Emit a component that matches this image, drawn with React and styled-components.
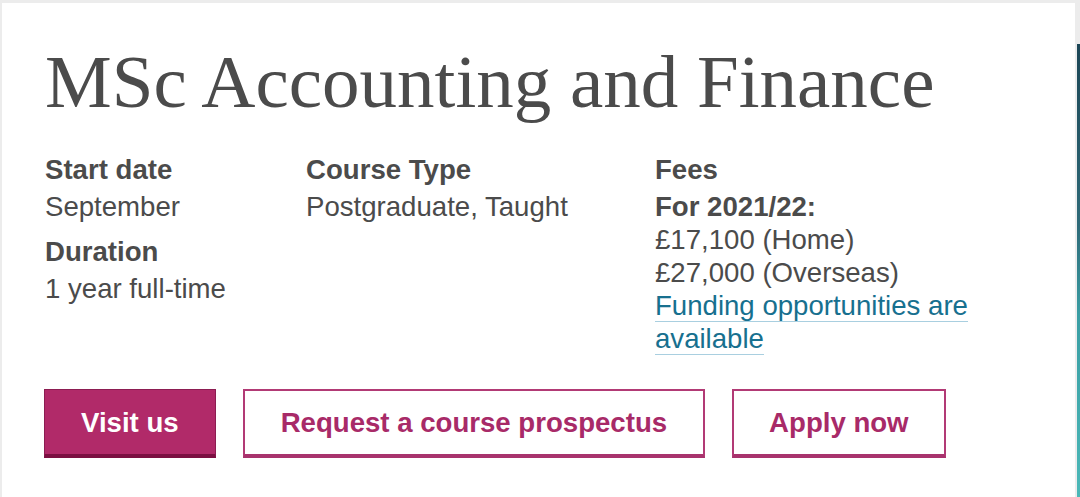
import React from "react";
import styled, { createGlobalStyle } from "styled-components";

const Global = createGlobalStyle`
  html, body { margin: 0; padding: 0; background: #ececec; }
  body { font-family: "Liberation Sans", Arial, sans-serif; }
  * { box-sizing: border-box; }
`;

const Page = styled.div`
  display: flex;
  height: 497px;
  padding: 3px 0 0 2px;
  gap: 2px;
  overflow: hidden;
`;

const Card = styled.section`
  flex: 0 0 1073px;
  background: #ffffff;
  padding: 41px 0 0 43px;
`;

const Strip = styled.div`
  flex: 1;
  margin-top: 41px;
  background: linear-gradient(180deg, #1c4656 0%, #2e6a78 40%, #3a9ea4 60%, #4bb8b8 100%);
`;

const Title = styled.h1`
  margin: 0;
  font-family: "Liberation Serif", Georgia, serif;
  font-weight: 400;
  font-size: 75px;
  line-height: 75px;
  color: #4b4b4b;
`;

const Info = styled.div`
  display: grid;
  grid-template-columns: 261px 349px 345px;
  margin-top: 34px;
  font-size: 27.6px;
  line-height: 33px;
  color: #4b4b4b;
`;

const Column = styled.div`
  display: flex;
  flex-direction: column;
  gap: 12px;
`;

const Item = styled.div`
  display: flex;
  flex-direction: column;
`;

const Label = styled.div`
  font-weight: 700;
  margin-bottom: 4px;
`;

const Value = styled.div`
  font-weight: ${(p) => (p.$bold ? 700 : 400)};
`;

const Link = styled.a`
  color: #17708f;
  text-decoration: none;
  border-bottom: 1px solid #a9cfe0;
`;

const Actions = styled.div`
  display: flex;
  gap: 27px;
  margin-top: 34px;
  margin-left: -1px;
`;

const Button = styled.a`
  display: inline-flex;
  align-items: center;
  justify-content: center;
  height: 69px;
  padding: 0 ${(p) => p.$pad || 36}px;
  font-size: 27.6px;
  font-weight: 700;
  text-decoration: none;
  background: ${(p) => (p.$primary ? "#b12a69" : "#ffffff")};
  color: ${(p) => (p.$primary ? "#ffffff" : "#a82a68")};
  border: ${(p) => (p.$primary ? "1px solid #8c1d52" : "2px solid #b23a75")};
  border-bottom: 4px solid ${(p) => (p.$primary ? "#7b0f41" : "#a8336d")};
  padding-top: ${(p) => (p.$primary ? 1 : 0)}px;
`;

export default function App() {
  return (
    <>
      <Global />
      <Page>
        <Card>
          <Title>MSc Accounting and Finance</Title>
          <Info>
            <Column>
              <Item>
                <Label>Start date</Label>
                <Value>September</Value>
              </Item>
              <Item>
                <Label>Duration</Label>
                <Value>1 year full-time</Value>
              </Item>
            </Column>
            <Column>
              <Item>
                <Label>Course Type</Label>
                <Value>Postgraduate, Taught</Value>
              </Item>
            </Column>
            <Column>
              <Item>
                <Label>Fees</Label>
                <Value $bold>For 2021/22:</Value>
                <Value>£17,100 (Home)</Value>
                <Value>£27,000 (Overseas)</Value>
                <Value>
                  <Link href="#">Funding opportunities are available</Link>
                </Value>
              </Item>
            </Column>
          </Info>
          <Actions>
            <Button href="#" $primary>Visit us</Button>
            <Button href="#">Request a course prospectus</Button>
            <Button href="#" $pad={35}>Apply now</Button>
          </Actions>
        </Card>
        <Strip />
      </Page>
    </>
  );
}
